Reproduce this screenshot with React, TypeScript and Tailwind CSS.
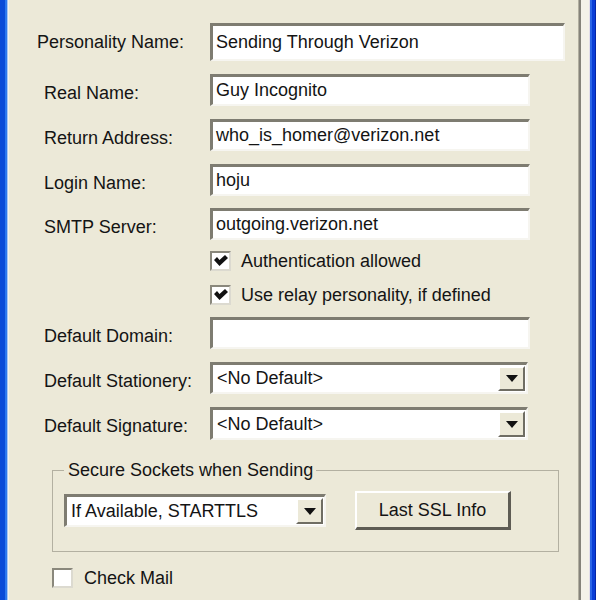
import React from 'react';

const font = { fontFamily: '"Liberation Sans", Arial, sans-serif' };

const Field = ({ className = '', children }: { className?: string; children?: React.ReactNode }) => (
  <div
    className={`flex items-center bg-white border-t-[3px] border-l-[3px] border-b-2 border-r-2 border-t-[#7E7C71] border-l-[#7E7C71] border-b-[#F6F5F0] border-r-[#F6F5F0] ${className}`}
  >
    {children}
  </div>
);

const DropButton = () => (
  <div className="w-[27px] self-stretch flex items-center justify-center bg-[#ECE9D8] border-t-2 border-l-2 border-b-2 border-r-2 border-t-white border-l-white border-b-[#6F6D63] border-r-[#6F6D63] mr-[1px] my-[1px]">
    <svg width="12" height="7" viewBox="0 0 12 7">
      <polygon points="0,0 12,0 6,7" fill="#111" />
    </svg>
  </div>
);

const Combo = ({ value, className = '', textPad = 'pl-[4px]' }: { value: string; className?: string; textPad?: string }) => (
  <Field className={className}>
    <span className={`flex-1 ${textPad} whitespace-nowrap`}>{value}</span>
    <DropButton />
  </Field>
);

const CheckBox = ({ checked }: { checked?: boolean }) => (
  <div className="w-[21px] h-[20px] shrink-0 flex items-center justify-center bg-white border-2 border-t-[#8A887C] border-l-[#8A887C] border-b-[#DCDAD0] border-r-[#DCDAD0]">
    {checked && (
      <svg width="14" height="12" viewBox="0 0 14 12">
        <polygon points="0,5 3,2 5.5,5 11,0 14,3 5.5,11" fill="#111" />
      </svg>
    )}
  </div>
);

const Row = ({ label, indent, mt, children }: { label: string; indent: string; mt: string; children: React.ReactNode }) => (
  <div className={`flex items-center ${mt}`}>
    <div className={`w-[201px] shrink-0 whitespace-nowrap ${indent}`}>{label}</div>
    {children}
  </div>
);

const CheckRow = ({ label, mt }: { label: string; mt: string }) => (
  <div className={`flex items-center h-[22px] ml-[201px] gap-[10px] ${mt}`}>
    <CheckBox checked />
    <span className="whitespace-nowrap">{label}</span>
  </div>
);

export default function App() {
  return (
    <div className="w-[596px] h-[600px] flex overflow-hidden bg-[#ECE9D8] text-[18px] leading-[21px] text-[#141414]" style={font}>
      {/* left window frame */}
      <div className="flex shrink-0">
        <div className="w-[5px] bg-[#0A4BD8]" />
        <div className="w-[2px] bg-[#2C78EE]" />
        <div className="w-[1px] bg-[#A9C6F3]" />
        <div className="w-[1px] bg-[#F5F3EA]" />
      </div>

      {/* dialog body */}
      <div className="w-[569px] shrink-0 flex flex-col">
        <Row label="Personality Name:" indent="pl-[28px]" mt="mt-[23px]">
          <Field className="w-[355px] h-[38px] pl-[3px]">Sending Through Verizon</Field>
        </Row>
        <Row label="Real Name:" indent="pl-[35px] pt-[6px]" mt="mt-[13px]">
          <Field className="w-[320px] h-[32px] pl-[3px]">Guy Incognito</Field>
        </Row>
        <Row label="Return Address:" indent="pl-[35px] pt-[6px]" mt="mt-[13px]">
          <Field className="w-[320px] h-[32px] pl-[3px]">who_is_homer@verizon.net</Field>
        </Row>
        <Row label="Login Name:" indent="pl-[35px] pt-[6px]" mt="mt-[13px]">
          <Field className="w-[320px] h-[32px] pl-[3px]">hoju</Field>
        </Row>
        <Row label="SMTP Server:" indent="pl-[35px] pt-[6px]" mt="mt-[12px]">
          <Field className="w-[320px] h-[32px] pl-[3px]">outgoing.verizon.net</Field>
        </Row>

        <CheckRow label="Authentication allowed" mt="mt-[10px]" />
        <CheckRow label="Use relay personality, if defined" mt="mt-[12px]" />

        <Row label="Default Domain:" indent="pl-[35px] pt-[6px]" mt="mt-[11px]">
          <Field className="w-[320px] h-[32px]" />
        </Row>
        <Row label="Default Stationery:" indent="pl-[35px] pt-[6px]" mt="mt-[13px]">
          <Combo value="<No Default>" className="w-[318px] h-[32px]" />
        </Row>
        <Row label="Default Signature:" indent="pl-[35px] pt-[6px]" mt="mt-[13px]">
          <Combo value="<No Default>" className="w-[318px] h-[33px]" />
        </Row>

        <fieldset className="ml-[43px] mt-[20px] w-[507px] border border-[#B3B0A1] pl-[11px] pt-[10px] pb-[21px]">
          <legend className="pl-[4px] pr-[3px] leading-[21px]">Secure Sockets when Sending</legend>
          <div className="flex items-center">
            <Combo value="If Available, STARTTLS" className="w-[262px] h-[33px]" textPad="pl-[4px]" />
            <div className="ml-[29px] w-[156px] h-[39px] flex items-center justify-center bg-[#ECE9D8] border-t-2 border-l-2 border-t-white border-l-white border-b-[3px] border-r-[3px] border-b-[#5E5C54] border-r-[#5E5C54]">
              Last SSL Info
            </div>
          </div>
        </fieldset>

        <div className="flex items-center h-[22px] ml-[43px] mt-[15px] gap-[11px]">
          <CheckBox />
          <span>Check Mail</span>
        </div>
      </div>

      {/* right window frame */}
      <div className="flex shrink-0">
        <div className="w-[1px] bg-[#B2AFA0]" />
        <div className="w-[2px] bg-[#85837A]" />
        <div className="w-[8px] bg-[#F4F2E9]" />
        <div className="w-[1px] bg-[#E2DDE8]" />
        <div className="w-[2px] bg-[#2A64E6]" />
        <div className="w-[3px] bg-[#0A3DD6]" />
        <div className="w-[1px] bg-[#0525A8]" />
      </div>
    </div>
  );
}
